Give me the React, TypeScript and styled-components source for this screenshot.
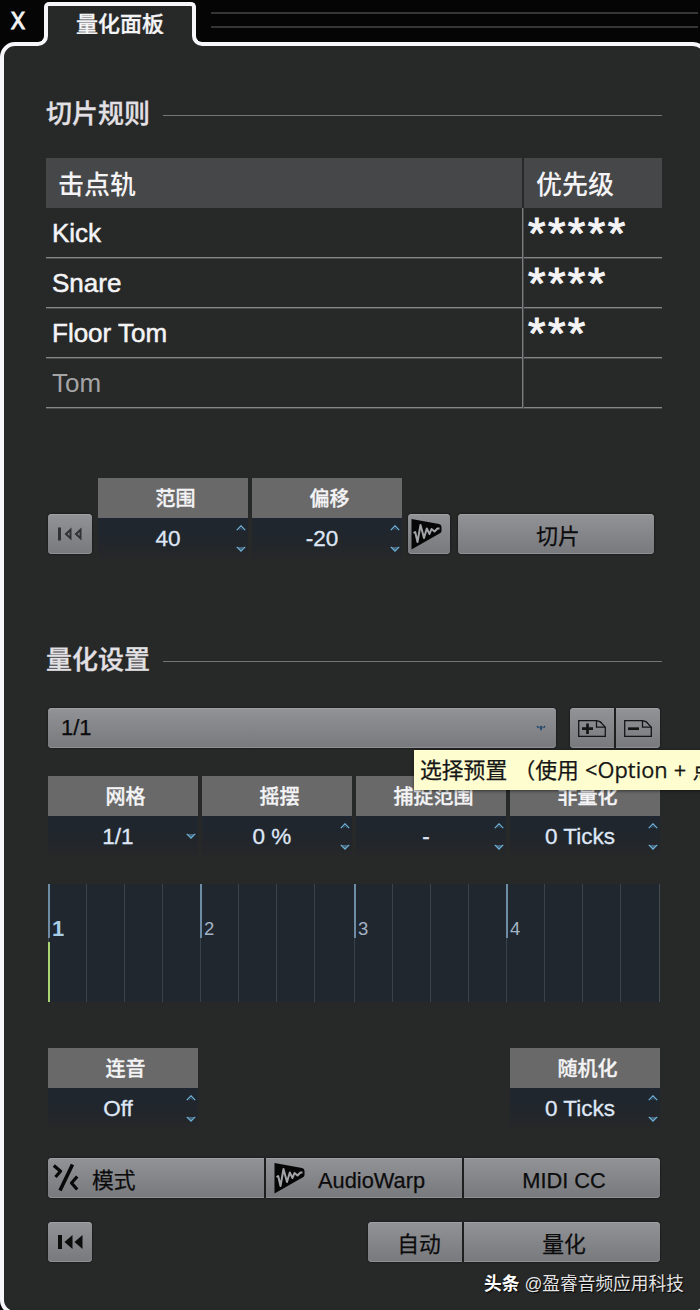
import React from "react";
import styled, { createGlobalStyle, css } from "styled-components";

const C = {
  panel: "#272828",
  outline: "#f7f7fb",
  label: "#696969",
  text: "#f4f4f6",
  value: "#dfe6f6",
  arrow: "#6fb4dc",
};

const GlobalStyle = createGlobalStyle`
  * { box-sizing: border-box; }
  body { margin: 0; background: #050505; }
  button { font: inherit; color: inherit; border: 0; padding: 0; margin: 0; }
`;

const Window = styled.div`
  width: 700px;
  height: 1310px;
  overflow: hidden;
  position: relative;
  background: #050505;
  color: ${C.text};
  font-family: "Liberation Sans", "Noto Sans CJK SC", sans-serif;
  white-space: nowrap;
`;

const TitleBar = styled.header`
  height: 46px;
  display: flex;
  position: relative;
  z-index: 1;
`;

const Close = styled.button`
  width: 36px;
  height: 40px;
  background: none;
  font: 400 23px/39px "Noto Sans", sans-serif;
  color: #f2f2f2;
  -webkit-text-stroke: 1px #f2f2f2;
`;

const TabWrap = styled.div`
  width: 168px;
  padding-top: 2px;
  display: flex;
  flex-direction: column;
  align-items: center;
`;

const Tab = styled.h1`
  margin: 0;
  width: 152px;
  height: 32px;
  border: 4px solid ${C.outline};
  border-bottom: 0;
  border-radius: 5px 5px 0 0;
  background: ${C.panel};
  text-align: center;
  font-size: 22px;
  font-weight: 500;
  line-height: 38px;
  -webkit-text-stroke: 0.3px ${C.text};
`;

const TabFoot = styled.div`
  width: 168px;
  height: 12px;
  display: flex;
  justify-content: space-between;
  background: ${C.panel};
`;

const FootCorner = styled.span<{ $side: "left" | "right" }>`
  width: 12px;
  height: 12px;
  background: #050505;
  border-bottom: 4px solid ${C.outline};
  ${(p) =>
    p.$side === "left"
      ? css`border-right: 4px solid ${C.outline}; border-bottom-right-radius: 10px;`
      : css`border-left: 4px solid ${C.outline}; border-bottom-left-radius: 10px;`}
`;

const Grip = styled.div`
  margin: 12px 0 0 7px;
  width: 487px;
  height: 16px;
  border: solid #353535;
  border-width: 2px 0;
`;

const Panel = styled.main`
  margin: -4px 0 0 0;
  width: 708px;
  height: 1273px;
  border: 4px solid ${C.outline};
  border-radius: 15px;
  background: ${C.panel};
  padding: 48px 0 0 42px;
  display: flex;
  flex-direction: column;
`;

const SectionTitle = styled.h2<{ $top?: number }>`
  margin: ${(p) => p.$top || 0}px 0 0;
  width: 616px;
  height: 38px;
  display: flex;
  align-items: center;
  gap: 13px;
  font-size: 26px;
  line-height: 36px;
  font-weight: 500;
  color: #e2e0e4;
  -webkit-text-stroke: 0.3px #e2e0e4;
  span { padding-top: 1px; }
  &::after {
    content: "";
    flex: 1;
    height: 1px;
    margin-top: 4px;
    background: #747575;
  }
`;

const Table = styled.section`
  margin-top: 26px;
  width: 616px;
`;

const HeadRow = styled.div`
  display: grid;
  grid-template-columns: 476px 138px;
  grid-template-rows: 50px;
  gap: 2px;
  height: 50px;
  font-size: 26px;
  line-height: 54px;
  font-weight: 500;
`;

const HeadCell = styled.div`
  background: #464748;
  padding-left: 12px;
`;

const Row = styled.div<{ $dim?: boolean }>`
  display: grid;
  grid-template-columns: 476px 140px;
  height: 50px;
  border-bottom: 1px solid #858888;
  box-shadow: 0 1px 0 #484a4b;
  font-size: 26px;
  line-height: 50px;
  color: ${(p) => (p.$dim ? "#a5a4a6" : C.text)};
  -webkit-text-stroke: ${(p) => (p.$dim ? "0" : "0.5px")} ${C.text};
`;

const Track = styled.div`
  padding-left: 6px;
`;

const Stars = styled.div`
  border-left: 1px solid #7b7e7f;
  box-shadow: inset 1px 0 0 #484a4b;
  padding-left: 5px;
  font-size: 45px;
  line-height: 51px;
  letter-spacing: 2.4px;
  height: 50px;
  -webkit-text-stroke: 1px ${C.text};
`;

const Line = styled.div<{ $top: number; $h?: number }>`
  width: 612px;
  margin: ${(p) => p.$top}px 0 0 2px;
  height: ${(p) => p.$h || 40}px;
  display: flex;
`;

const SideButtons = styled.div<{ $ml?: number }>`
  display: flex;
  padding-top: 36px;
  margin-left: ${(p) => p.$ml || 0}px;
`;

const Fields = styled.div<{ $ml?: number }>`
  display: flex;
  gap: 4px;
  margin-left: ${(p) => p.$ml || 0}px;
`;

const FieldBox = styled.div`
  width: 150px;
`;

const FieldLabel = styled.div`
  height: 40px;
  background: ${C.label};
  font-size: 20px;
  line-height: 42px;
  font-weight: 500;
  padding-left: 5px;
  text-align: center;
  -webkit-text-stroke: 0.3px ${C.text};
`;

const FieldValue = styled.div`
  height: 44px;
  display: flex;
  background: linear-gradient(#1f262f, #21262c 50%, ${C.panel});
  font-size: 22.5px;
  line-height: 41px;
  color: ${C.value};
  -webkit-text-stroke: 0.3px ${C.value};
`;

const FieldText = styled.span`
  width: 140px;
  padding-left: 2px;
  text-align: center;
`;

const Arrows = styled.span`
  width: 10px;
  height: 40px;
  margin-right: 2px;
  display: flex;
  flex-direction: column;
  align-items: center;
  justify-content: center;
  gap: 15px;
  svg { display: block; flex: none; }
`;

const Btn = styled.button<{ $w: number; $r?: string; $ml?: number; $color?: string }>`
  width: ${(p) => p.$w}px;
  height: 40px;
  flex: none;
  margin-left: ${(p) => p.$ml || 0}px;
  border-radius: ${(p) => p.$r || "4px"};
  background: linear-gradient(#929397, #85868a 50%, #77797c);
  box-shadow: inset 0 1px 0 #9fa0a3, inset 0 -1px 0 #8e9093, 0 0 2px #0e0e0e;
  color: ${(p) => p.$color || "#0c0c0d"};
  font-size: 21.8px;
  line-height: 40px;
  display: flex;
  align-items: center;
  justify-content: center;
  -webkit-text-stroke: 0.25px currentColor;
  svg { display: block; flex: none; }
`;

const Caption = styled.span<{ $ml?: number }>`
  padding: 5px 0 0 ${(p) => (p.$ml === undefined ? 4 : p.$ml)}px;
`;

const LeadingBtn = styled(Btn)<{ $pad: number }>`
  justify-content: flex-start;
  padding-left: ${(p) => p.$pad}px;
`;

const PresetSelect = styled(Btn)`
  justify-content: space-between;
  padding: 0 10px 0 13px;
  font-size: 22px;
`;

const Tooltip = styled.div`
  position: absolute;
  left: 414px;
  top: 750px;
  width: 300px;
  height: 40px;
  padding-left: 6px;
  background: #fefdd0;
  color: #161616;
  font-family: "Open Sans", "Noto Sans CJK SC", sans-serif;
  font-size: 21.8px;
  line-height: 40px;
  word-spacing: 0.6px;
  -webkit-text-stroke: 0.25px #161616;
  box-shadow: 0 1px 3px rgba(0, 0, 0, 0.5);
`;

const BeatGrid = styled.div`
  width: 612px;
  height: 118px;
  margin: 24px 0 0 2px;
  display: flex;
  border-right: 1px solid #434c52;
  background: #20272f;
`;

const Beat = styled.div<{ $w: number; $first: boolean }>`
  width: ${(p) => p.$w}px;
  display: grid;
  grid-template-columns: 38px 38px 38px 1fr;
  position: relative;
  color: ${(p) => (p.$first ? "#a9cce6" : "#a3b3c6")};
  font-size: ${(p) => (p.$first ? 22 : 18.5)}px;
  font-weight: ${(p) => (p.$first ? 700 : 400)};
`;

const Step = styled.i`
  border-left: 1px solid #3a434a;
`;

const BeatMark = styled.span`
  position: absolute;
  left: 0;
  top: 0;
  height: 54px;
  border-left: 2px solid #6e8da5;
  padding: 34px 0 0 2px;
  line-height: 22px;
`;

const HitMark = styled.span`
  position: absolute;
  left: 0;
  top: 58px;
  height: 60px;
  width: 2px;
  background: #a9d672;
`;

const Watermark = styled.footer`
  position: absolute;
  left: 484px;
  top: 1270px;
  font-size: 17.7px;
  line-height: 28px;
  color: #e4e4e4;
  text-shadow: 1px 1px 1px #000;
  b { color: #fff; margin-right: 5px; }
`;

const UpIcon = () => (
  <svg width="10" height="6" viewBox="0 0 10 6" fill="none">
    <path d="M0.8 5.2 5 0.8l4.2 4.4" stroke={C.arrow} strokeWidth="1.2" />
    <path d="M3.2 5 5 3l1.8 2" stroke="#35566c" strokeWidth="0.8" />
  </svg>
);

const DownIcon = ({ color = C.arrow }: { color?: string }) => (
  <svg width="10" height="6" viewBox="0 0 10 6" fill="none">
    <path d="M0.5 1h9L5 5.2z" fill={color} opacity="0.45" />
    <path d="M0.8 0.8 5 5.2l4.2-4.4" stroke={color} strokeWidth="1.1" />
  </svg>
);

const MenuMark = () => (
  <svg width="10" height="6" viewBox="0 0 10 6" fill="none" stroke="#22486a">
    <path d="M1 1 2.500 3M4 1 5 5M9 1 7.500 3M6 1 5 5" strokeWidth="1.300" />
  </svg>
);

const RewindIcon = () => (
  <svg width="26" height="16" viewBox="0 0 26 16" fill="currentColor">
    <path d="M1 1h4v14H1zM15.500 1v14L7.500 8zM25.500 1v14L17.500 8z" />
  </svg>
);

const ThinRewindIcon = () => (
  <svg width="26" height="16" viewBox="0 0 26 16" fill="currentColor">
    <path d="M1 1.500h3v13H1z" />
    <path d="M14.500 1.500v13L7.500 8zM12.500 6v4L10.500 8z" fillRule="evenodd" />
    <path d="M24.500 1.500v13L17.500 8zM22.500 6v4L20.500 8z" fillRule="evenodd" />
  </svg>
);

const WarpIcon = () => (
  <svg width="31" height="31" viewBox="0 0 31 31" fill="none">
    <path d="M0.500 0 28 5Q30.500 5.500 30.500 8v4q0 1.500-2 2.500L0.500 30.500z" fill="#060606" />
    <path
      d="M2.500 14 4.200 13 6.500 23 9.500 6l3.500 13 2.800-9.500 2.700 5.500 2-5 3 2.500 3-3h2"
      stroke="#a3a4a8"
      strokeWidth="2"
      strokeLinejoin="round"
    />
  </svg>
);

const PageIcon = ({ plus }: { plus?: boolean }) => (
  <svg width="28" height="17" viewBox="0 0 28 17" fill="none" stroke="#151515">
    <path d="M0.700 0.700H18.500q4 0.500 5.500 3l3.300 3.500v9.100H0.700z" strokeWidth="1.300" />
    <path d="M18.500 0.700V7.200h8.800" strokeWidth="1.300" />
    <path d={plus ? "M4 8.700h11M9.500 3.500v10.400" : "M4 8.700h11"} strokeWidth="2.700" />
  </svg>
);

const ModeIcon = () => (
  <svg width="26" height="30" viewBox="0 0 26 30" fill="none" stroke="#080808" strokeLinejoin="round">
    <path d="M19.500 1.500 7 27.500" strokeWidth="3.600" />
    <path d="M0.800 2.500 7.500 8.300 2.500 14" strokeWidth="3.200" />
    <path d="M24.200 13.500 18.500 20l5.700 6.500" strokeWidth="3.200" />
  </svg>
);

function Field({ label, value, menu }: { label: string; value: string; menu?: boolean }) {
  return (
    <FieldBox>
      <FieldLabel>{label}</FieldLabel>
      <FieldValue>
        <FieldText>{value}</FieldText>
        <Arrows>
          {!menu && <UpIcon />}
          <DownIcon />
        </Arrows>
      </FieldValue>
    </FieldBox>
  );
}

const tracks = [
  { name: "Kick", priority: 5 },
  { name: "Snare", priority: 4 },
  { name: "Floor Tom", priority: 3 },
  { name: "Tom", priority: 0 },
];

export default function App() {
  return (
    <Window>
      <GlobalStyle />
      <TitleBar>
        <Close>X</Close>
        <TabWrap>
          <Tab>量化面板</Tab>
          <TabFoot>
            <FootCorner $side="left" />
            <FootCorner $side="right" />
          </TabFoot>
        </TabWrap>
        <Grip />
      </TitleBar>
      <Panel>
        <SectionTitle><span>切片规则</span></SectionTitle>
        <Table>
          <HeadRow>
            <HeadCell>击点轨</HeadCell>
            <HeadCell>优先级</HeadCell>
          </HeadRow>
          {tracks.map((t) => (
            <Row key={t.name} $dim={t.priority === 0}>
              <Track>{t.name}</Track>
              <Stars>{"*".repeat(t.priority)}</Stars>
            </Row>
          ))}
        </Table>
        <Line $top={70} $h={84}>
          <SideButtons>
            <Btn $w={44} $color="#303134"><ThinRewindIcon /></Btn>
          </SideButtons>
          <Fields $ml={6}>
            <Field label="范围" value="40" />
            <Field label="偏移" value="-20" />
          </Fields>
          <SideButtons $ml={6}>
            <LeadingBtn $w={42} $pad={3}><WarpIcon /></LeadingBtn>
            <Btn $w={196} $ml={8}><Caption>切片</Caption></Btn>
          </SideButtons>
        </Line>
        <SectionTitle $top={78}><span>量化设置</span></SectionTitle>
        <Line $top={30}>
          <PresetSelect $w={508}>
            1/1
            <MenuMark />
          </PresetSelect>
          <Btn $w={44} $ml={14} $r="4px 0 0 4px"><PageIcon plus /></Btn>
          <Btn $w={44} $ml={2} $r="0 4px 4px 0"><PageIcon /></Btn>
        </Line>
        <Line $top={28} $h={84}>
          <Fields>
            <Field label="网格" value="1/1" menu />
            <Field label="摇摆" value="0 %" />
            <Field label="捕捉范围" value="-" />
            <Field label="非量化" value="0 Ticks" />
          </Fields>
        </Line>
        <BeatGrid>
          {[152, 154, 152, 153].map((w, i) => (
            <Beat key={i} $w={w} $first={i === 0}>
              <Step /><Step /><Step /><Step />
              <BeatMark>{i + 1}</BeatMark>
              {i === 0 && <HitMark />}
            </Beat>
          ))}
        </BeatGrid>
        <Line $top={46} $h={84}>
          <Fields>
            <Field label="连音" value="Off" />
          </Fields>
          <Fields $ml={312}>
            <Field label="随机化" value="0 Ticks" />
          </Fields>
        </Line>
        <Line $top={26}>
          <LeadingBtn $w={216} $r="4px 0 0 4px" $pad={5}>
            <ModeIcon />
            <Caption $ml={13}>模式</Caption>
          </LeadingBtn>
          <LeadingBtn $w={196} $ml={2} $r="0" $pad={8}>
            <WarpIcon />
            <Caption $ml={13}>AudioWarp</Caption>
          </LeadingBtn>
          <Btn $w={196} $ml={2} $r="0 4px 4px 0"><Caption>MIDI CC</Caption></Btn>
        </Line>
        <Line $top={24}>
          <Btn $w={44}><RewindIcon /></Btn>
          <Btn $w={94} $ml={276} $r="4px 0 0 4px"><Caption $ml={8}>自动</Caption></Btn>
          <Btn $w={196} $ml={2} $r="0 4px 4px 0"><Caption>量化</Caption></Btn>
        </Line>
      </Panel>
      <Tooltip>选择预置 （使用 &lt;Option + 点</Tooltip>
      <Watermark><b>头条</b>@盈睿音频应用科技</Watermark>
    </Window>
  );
}
